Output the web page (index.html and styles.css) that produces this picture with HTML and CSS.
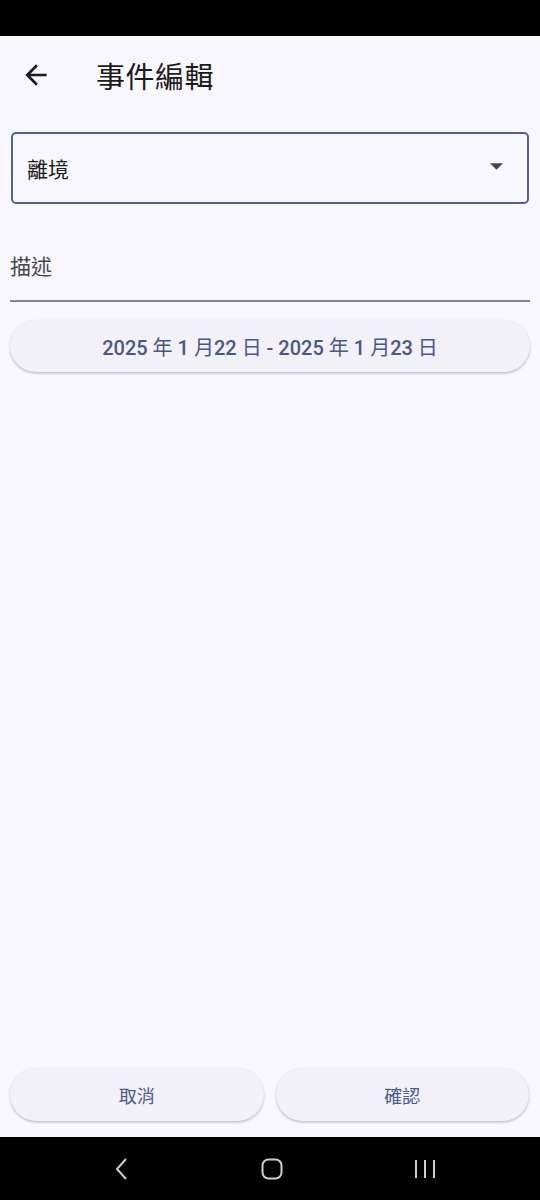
FILE: index.html
```html
<!DOCTYPE html>
<html lang="zh-Hant">
<head>
<meta charset="utf-8">
<link rel="stylesheet" href="styles.css">
</head>
<body>
<div class="status-bar"></div>
<div class="screen">
  <header class="app-bar">
    <svg class="back" viewBox="0 0 24 24" width="32" height="32"><path d="M20 11H7.83l5.59-5.59L12 4l-8 8 8 8 1.41-1.41L7.83 13H20v-2z" fill="#1c1b20"/></svg>
    <h1 class="title">事件編輯</h1>
  </header>
  <main class="content">
    <div class="dropdown">
      <span class="dropdown-text">離境</span>
      <svg class="caret" viewBox="0 0 12 6" width="13" height="7"><path d="M0 0h12L6 6z" fill="#49454f"/></svg>
    </div>
    <div class="text-field">
      <span class="label">描述</span>
    </div>
    <button class="pill date-btn">2025 <span class="cjk">年</span> 1 <span class="cjk">月</span>22 <span class="cjk">日</span> - 2025 <span class="cjk">年</span> 1 <span class="cjk">月</span>23 <span class="cjk">日</span></button>
  </main>
  <footer class="actions">
    <button class="pill action">取消</button>
    <button class="pill action">確認</button>
  </footer>
</div>
<nav class="nav-bar">
  <svg class="nav-back" viewBox="0 0 14 22" width="14" height="22"><path d="M12 1L3 11l9 10" fill="none" stroke="#cfcfcf" stroke-width="2"/></svg>
  <svg viewBox="0 0 22 22" width="22" height="22"><rect x="1.5" y="1.5" width="19" height="19" rx="6" fill="none" stroke="#cfcfcf" stroke-width="2"/></svg>
  <svg viewBox="0 0 22 22" width="22" height="22"><path d="M2 2v18M11 2v18M20 2v18" stroke="#cfcfcf" stroke-width="2"/></svg>
</nav>
</body>
</html>
```
FILE: styles.css
```css
* { box-sizing: border-box; }
html, body { margin: 0; padding: 0; }
body {
  width: 540px;
  height: 1200px;
  background: #f8f7fd;
  font-family: Roboto, "Noto Sans CJK TC", sans-serif;
  color: #1c1b20;
  display: flex;
  flex-direction: column;
}
.status-bar { height: 36px; background: #000; flex: none; }
.screen {
  flex: 1;
  display: flex;
  flex-direction: column;
  background: #f8f7fd;
}
.app-bar {
  height: 78px;
  display: flex;
  align-items: center;
  padding-left: 20px;
}
.back { flex: none; }
.title {
  margin: 0 0 0 44px;
  font-size: 29px;
  font-weight: 400;
  color: #1c1b20;
  letter-spacing: 0.5px;
}
.content {
  flex: 1;
  padding: 18px 10px 0;
  display: flex;
  flex-direction: column;
}
.dropdown {
  height: 72px;
  border: 2px solid #52608f;
  border-radius: 5px;
  margin: 0 1px;
  display: flex;
  align-items: center;
  justify-content: space-between;
  padding: 0 24px 0 14px;
}
.dropdown-text { font-size: 21px; color: #1c1b20; }
.caret { margin-top: -4px; }
.text-field {
  height: 98px;
  border-bottom: 2px solid #86858c;
  display: flex;
  align-items: flex-end;
  padding-bottom: 20px;
}
.label { font-size: 21px; color: #46454c; }
.pill {
  border: none;
  background: #f2f1f7;
  border-radius: 27px;
  font-family: Roboto, "Noto Sans CJK TC", sans-serif;
  color: #4c5a8c;
  box-shadow: 0 1.5px 2.5px rgba(0,0,0,0.22), 0 0 1px rgba(0,0,0,0.08);
  cursor: pointer;
}
.date-btn {
  margin-top: 18px;
  height: 52px;
  font-size: 20px;
  font-weight: 500;
  color: #4a5786;
}
.cjk { font-weight: 400; }
.actions {
  display: grid;
  grid-template-columns: 1fr 1fr;
  gap: 12px;
  padding: 0 11px 16px 10px;
}
.action {
  height: 53px;
  font-size: 18px;
  font-weight: 400;
}
.nav-bar {
  height: 63px;
  flex: none;
  background: #000;
  display: flex;
  align-items: center;
  justify-content: center;
  gap: 131px;
  padding-left: 10px;
}
.nav-back { margin-right: 2px; }
```
